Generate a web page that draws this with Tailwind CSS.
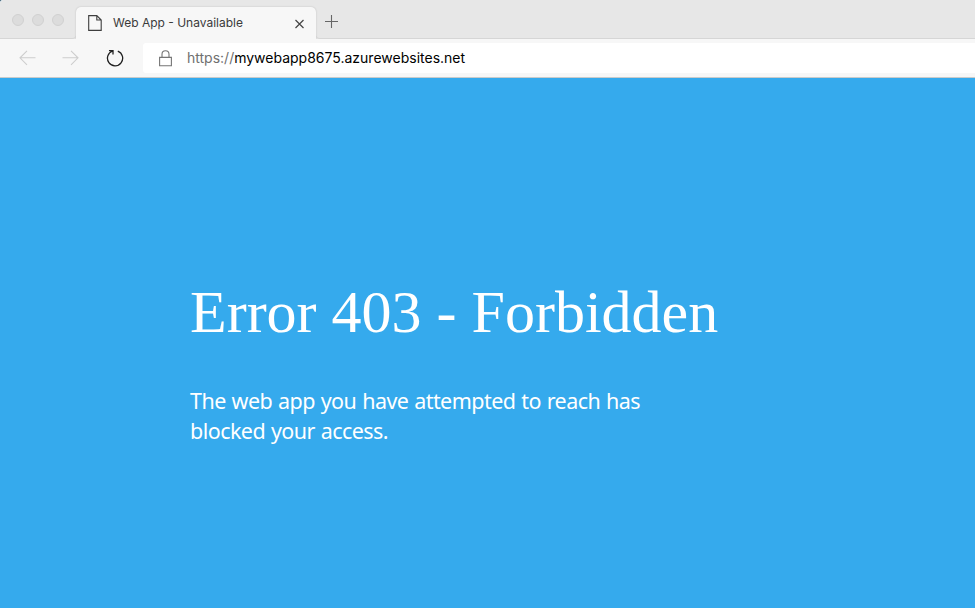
<!DOCTYPE html>
<html lang="en">
<head>
<meta charset="utf-8">
<title>Web App - Unavailable</title>
<script src="https://cdn.jsdelivr.net/npm/@tailwindcss/browser@4"></script>
</head>
<body class="w-[975px] h-[608px] overflow-hidden bg-black font-['Inter',sans-serif]">
<div class="flex h-full flex-col overflow-hidden rounded-tl-[2px] bg-[#35aaed]">
  <header class="flex h-[39px] shrink-0 items-end bg-[#e7e7e7]">
    <div class="flex h-[39px] w-[76px] shrink-0 gap-2 rounded-br-[4px] border-b border-[#d6d6d6] pl-3 pt-[14px]">
      <span class="size-3 rounded-full border border-[#d1d1d1] bg-[#dcdcdc]"></span>
      <span class="size-3 rounded-full border border-[#d1d1d1] bg-[#dcdcdc]"></span>
      <span class="size-3 rounded-full border border-[#d1d1d1] bg-[#dcdcdc]"></span>
    </div>
    <div class="flex h-8 w-[240px] shrink-0 items-center rounded-t-[5px] bg-[#f7f7f7] pl-3 pr-3 shadow-[0_0_2px_#00000030] [clip-path:inset(-3px_-3px_0_-3px)]">
      <svg class="h-4 w-[14px]" viewBox="0 0 14 16" fill="none" stroke="#3e3e3e" stroke-width="1.1"><path d="M.7.6H8.8L13.2 5V15.4H.7ZM8.8.6V5H13.2"/></svg>
      <span class="ml-[11px] flex-1 whitespace-nowrap text-[12px] leading-4 text-[#3b3b3b]">Web App - Unavailable</span>
      <svg class="mt-px size-[10px]" viewBox="0 0 10 10" stroke="#444" stroke-width="1.2"><path d="M1.5 1 9.5 9M9.5 1 1.5 9"/></svg>
    </div>
    <div class="flex h-[39px] flex-1 rounded-bl-[4px] border-b border-[#d6d6d6] pl-[9px] pt-[15px]">
      <svg class="size-[13px]" viewBox="0 0 13 13" stroke="#666" stroke-width="1.1"><path d="M6.5 0V13M0 6.5H13"/></svg>
    </div>
  </header>
  <nav class="flex h-[39px] shrink-0 items-start border-b border-[#c9cbcb] bg-[#f7f7f7] pt-1">
    <svg class="ml-[19px] mt-[7px] h-4 w-[17px]" viewBox="0 0 17 16" fill="none" stroke="#cdcdcd" stroke-width="1.1"><path d="M16.5 7.8H1M8 .8 1 7.8 8 14.8"/></svg>
    <svg class="ml-[26px] mt-[7px] h-4 w-[17px]" viewBox="0 0 17 16" fill="none" stroke="#cdcdcd" stroke-width="1.1"><path d="M.5 7.8H16M9 .8 16 7.8 9 14.8"/></svg>
    <svg class="ml-[27px] mt-[6px] h-[19px] w-[18px]" viewBox="0 0 18 19" fill="none" stroke="#202020" stroke-width="1.3"><path d="M11.8 2.1A7.6 7.6 0 1 1 6.6 2M3 1.6H7V5.6"/></svg>
    <div class="ml-[19px] flex h-[30px] flex-1 items-center rounded-l-[3px] bg-white pl-4">
      <svg class="h-[17px] w-[13px]" viewBox="0 0 13 17" fill="none" stroke="#757575" stroke-width="1.1"><path d="M.6 7.4H12.4V15.8H.6ZM3 7.4V4.2C3 2 4.4.7 6.5.7S10 2 10 4.2V7.4"/></svg>
      <span class="ml-[15px] whitespace-nowrap text-[14px] leading-5 text-black"><span class="text-[#707070]">https://</span>mywebapp8675.azurewebsites.net</span>
    </div>
  </nav>
  <main class="flex-1 pl-[190px] pt-[199px] text-white">
    <h1 class="whitespace-nowrap font-['Liberation_Serif',serif] text-[60px] leading-[70px]">Error 403 - Forbidden</h1>
    <p class="mt-[39px] whitespace-nowrap font-['Noto_Sans','Open_Sans',sans-serif] text-[21.5px] leading-[30px] tracking-[-0.55px] [word-spacing:0.8px]">The web app you have attempted to reach has<br>blocked your access.</p>
  </main>
</div>
</body>
</html>
